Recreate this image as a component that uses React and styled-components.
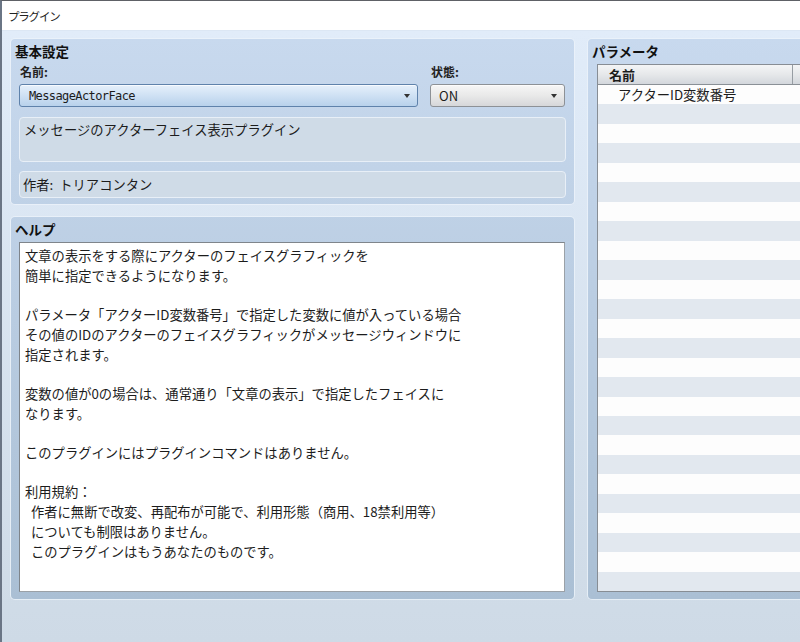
import React from 'react';
import styled, { createGlobalStyle } from 'styled-components';

const GlobalStyle = createGlobalStyle`
  html, body {
    margin: 0;
    padding: 0;
  }
  body {
    width: 800px;
    height: 642px;
    overflow: hidden;
    font-family: "Noto Sans CJK JP", "Noto Sans", sans-serif;
    color: #1c1c1c;
  }
`;

const Window = styled.div`
  width: 800px;
  height: 642px;
  box-sizing: border-box;
  border-top: 1px solid #5e6166;
  border-left: 2px solid #6a7585;
  display: flex;
  flex-direction: column;
  overflow: hidden;
`;

const TitleBar = styled.div`
  height: 29px;
  flex-shrink: 0;
  background: #ffffff;
  border-bottom: 1px solid #dce7f4;
  display: flex;
  align-items: center;
  padding-left: 6px;
  font-size: 11.5px;
  letter-spacing: -1.2px;
  color: #222;
`;

const Body = styled.div`
  flex: 1;
  display: flex;
  align-items: flex-start;
  gap: 12px;
  padding: 7px 0 0 8px;
  background: linear-gradient(#e1ecf9, #cedae6);
`;

const Column = styled.div`
  width: 565px;
  flex-shrink: 0;
  display: flex;
  flex-direction: column;
  gap: 11px;
`;

const Panel = styled.section`
  box-sizing: border-box;
  height: ${(p) => p.$height}px;
  width: ${(p) => (p.$width ? `${p.$width}px` : 'auto')};
  flex-shrink: 0;
  display: flex;
  flex-direction: column;
  padding: 3px 8px ${(p) => p.$bottom ?? 7}px 8px;
  border: 1px solid rgba(240, 246, 252, 0.85);
  border-radius: 5px;
  background: linear-gradient(#c8d9ee 38px, #aabfd4 600px);
  background-attachment: fixed;
`;

const PanelTitle = styled.h2`
  margin: 0 0 4px -4px;
  height: 18px;
  line-height: 18px;
  font-size: 13.5px;
  font-weight: 700;
  color: #111;
`;

const FieldGrid = styled.div`
  display: grid;
  grid-template-columns: 399px 135px;
  column-gap: 12px;
  row-gap: 4px;
`;

const Label = styled.div`
  height: 16px;
  line-height: 16px;
  font-size: 12px;
  font-weight: 700;
  padding-left: 1px;
  color: #222;
`;

const Select = styled.div`
  box-sizing: border-box;
  height: 23px;
  display: flex;
  align-items: center;
  justify-content: space-between;
  padding: 0 7px 0 8px;
  border-radius: 3px;
  border: 1px solid ${(p) => (p.$active ? '#5f82ab' : '#8d9196')};
  background: ${(p) =>
    p.$active
      ? 'linear-gradient(#e6f0fb, #cfe1f4 50%, #b8d1eb)'
      : 'linear-gradient(#f6f6f6, #e9e9e9 50%, #d6d7d9)'};
  box-shadow: inset 0 1px 0 rgba(255, 255, 255, 0.7);
  font-size: 13px;
`;

const MonoText = styled.span`
  font-family: "DejaVu Sans Mono", "Liberation Mono", monospace;
  font-size: 12px;
  letter-spacing: -0.6px;
  padding-left: 1px;
`;

const Arrow = styled.span`
  width: 0;
  height: 0;
  border-left: 3.5px solid transparent;
  border-right: 3.5px solid transparent;
  border-top: 4px solid #333;
  margin-top: 1px;
`;

const InfoBox = styled.div`
  box-sizing: border-box;
  height: ${(p) => p.$height}px;
  margin-top: ${(p) => p.$gap}px;
  padding: ${(p) => (p.$center ? '0 4px 0 3px' : '3px 4px')};
  display: flex;
  align-items: ${(p) => (p.$center ? 'center' : 'flex-start')};
  background: #cfdbe7;
  border: 1px solid #e8eff7;
  border-radius: 4px;
  font-size: 13.3px;
  line-height: 18px;
  white-space: pre;
`;

const TextArea = styled.div`
  box-sizing: border-box;
  flex: 1;
  width: 546px;
  background: #ffffff;
  border: 1px solid #9ba1a7;
  border-top-color: #7f858b;
  border-left-color: #7f858b;
  padding: 3px 5px;
  font-size: 13.3px;
  line-height: 19.7px;
  white-space: pre-wrap;
`;

const Table = styled.div`
  box-sizing: border-box;
  flex: 1;
  margin-left: 1px;
  display: flex;
  flex-direction: column;
  border: 1px solid #878d94;
  border-right: none;
  background: #ffffff;
`;

const HeaderRow = styled.div`
  height: 19px;
  display: flex;
  border-bottom: 1px solid #8a9096;
  background: linear-gradient(#f4f5f6, #e6e8ea 50%, #d3d7dc);
`;

const HeaderCell = styled.div`
  box-sizing: border-box;
  width: ${(p) => (p.$width ? `${p.$width}px` : 'auto')};
  flex: ${(p) => (p.$width ? '0 0 auto' : '1')};
  border-right: 1px solid #979da3;
  padding-left: 11px;
  line-height: 19px;
  font-size: 13px;
  font-weight: 700;
`;

const Rows = styled.div`
  flex: 1;
  display: flex;
  flex-direction: column;
`;

const Row = styled.div`
  flex: 1;
  display: flex;
  align-items: center;
  padding-left: 20px;
  font-size: 13.3px;
  background: ${(p) => (p.$alt ? '#e2e8ef' : '#fdfdfd')};
`;

const helpText = `文章の表示をする際にアクターのフェイスグラフィックを
簡単に指定できるようになります。

パラメータ「アクターID変数番号」で指定した変数に値が入っている場合
その値のIDのアクターのフェイスグラフィックがメッセージウィンドウに
指定されます。

変数の値が0の場合は、通常通り「文章の表示」で指定したフェイスに
なります。

このプラグインにはプラグインコマンドはありません。

利用規約：
  作者に無断で改変、再配布が可能で、利用形態（商用、18禁利用等）
  についても制限はありません。
  このプラグインはもうあなたのものです。`;

const params = ['アクターID変数番号'];
const rowCount = 26;

export default function App() {
  return (
    <>
      <GlobalStyle />
      <Window>
        <TitleBar>プラグイン</TitleBar>
        <Body>
          <Column>
            <Panel $height={167} $bottom={6}>
              <PanelTitle>基本設定</PanelTitle>
              <FieldGrid>
                <Label>名前:</Label>
                <Label>状態:</Label>
                <Select $active>
                  <MonoText>MessageActorFace</MonoText>
                  <Arrow />
                </Select>
                <Select>
                  <span>ON</span>
                  <Arrow />
                </Select>
              </FieldGrid>
              <InfoBox $height={45} $gap={10}>
                メッセージのアクターフェイス表示プラグイン
              </InfoBox>
              <InfoBox $height={27} $gap={9} $center>
                {'作者:  トリアコンタン'}
              </InfoBox>
            </Panel>
            <Panel $height={384}>
              <PanelTitle>ヘルプ</PanelTitle>
              <TextArea>{helpText}</TextArea>
            </Panel>
          </Column>
          <Panel $height={562} $width={260}>
            <PanelTitle>パラメータ</PanelTitle>
            <Table>
              <HeaderRow>
                <HeaderCell $width={195}>名前</HeaderCell>
                <HeaderCell />
              </HeaderRow>
              <Rows>
                {Array.from({ length: rowCount }, (_, i) => (
                  <Row key={i} $alt={i % 2 === 1}>
                    {params[i] || ''}
                  </Row>
                ))}
              </Rows>
            </Table>
          </Panel>
        </Body>
      </Window>
    </>
  );
}
